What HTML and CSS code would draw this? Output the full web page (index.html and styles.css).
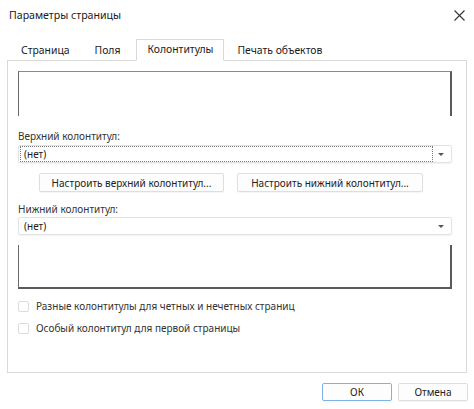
FILE: index.html
```html
<!DOCTYPE html>
<html lang="ru">
<head>
<meta charset="utf-8">
<title>Параметры страницы</title>
<link rel="stylesheet" href="styles.css">
</head>
<body>
<div class="dialog">
  <div class="titlebar">
    <span class="title">Параметры страницы</span>
    <svg class="close" width="11" height="11" viewBox="0 0 11 11"><path d="M0.5 0.5L10.5 10.5M10.5 0.5L0.5 10.5" stroke="#333" stroke-width="1.1" fill="none"/></svg>
  </div>
  <div class="tabs">
    <div class="tab t1">Страница</div>
    <div class="tab t2">Поля</div>
    <div class="tab t3 active">Колонтитулы</div>
    <div class="tab t4">Печать объектов</div>
  </div>
  <div class="panel">
    <div class="preview preview-top"></div>
    <div class="label l1">Верхний колонтитул:</div>
    <div class="select focused">
      <span class="select-text">(нет)</span>
      <span class="arrow"></span>
    </div>
    <div class="btn-row">
      <button class="btn b-top">Настроить верхний колонтитул...</button>
      <button class="btn b-bot">Настроить нижний колонтитул...</button>
    </div>
    <div class="label l2">Нижний колонтитул:</div>
    <div class="select">
      <span class="select-text">(нет)</span>
      <span class="arrow"></span>
    </div>
    <div class="preview preview-bottom"></div>
    <label class="check c1"><span class="box"></span>Разные колонтитулы для четных и нечетных страниц</label>
    <label class="check c2"><span class="box"></span>Особый колонтитул для первой страницы</label>
  </div>
  <div class="footer">
    <button class="btn ok">ОК</button>
    <button class="btn cancel">Отмена</button>
  </div>
</div>
</body>
</html>
```

FILE: styles.css
```css
html, body {
  margin: 0;
  padding: 0;
  background: #ffffff;
}
body {
  width: 474px;
  height: 409px;
  overflow: hidden;
  font-family: "Noto Sans", "Open Sans", sans-serif;
  font-size: 10px;
  color: #222;
}
.dialog {
  width: 474px;
  height: 409px;
  box-sizing: border-box;
  background: #fff;
}
.titlebar {
  height: 30px;
  display: flex;
  align-items: center;
  justify-content: space-between;
  padding: 0 9px 0 9px;
}
.title {
  font-size: 10.6px;
  color: #1a1a1a;
}
.close {
  display: block;
}
.tabs {
  display: flex;
  align-items: flex-end;
  height: 31px;
  padding-left: 10px;
  position: relative;
  z-index: 1;
  font-size: 10.4px;
}
.tab {
  height: 21px;
  line-height: 20px;
  padding: 0 11px;
  color: #1a1a1a;
}
.t1 { margin-right: 3px; }
.t2 { margin-right: 5px; }
.t3 { margin-right: 2px; }
.tab.active {
  background: #fff;
  border: 1px solid #d9d9d9;
  border-bottom: 1px solid #fff;
  box-sizing: border-box;
  line-height: 19px;
  height: 22px;
  padding: 0 10px;
}
.panel {
  margin: -1px 7px 0 7px;
  height: 313px;
  box-sizing: border-box;
  border: 1px solid #d9d9d9;
  padding: 10px 14px 0 10px;
  display: flex;
  flex-direction: column;
}
.preview {
  height: 45px;
  flex: none;
  box-sizing: border-box;
  border-left: 1px solid #6a6a6a;
  border-right: 2px solid #5a5a5a;
}
.preview-top {
  border-top: 1px solid #8a8a8a;
}
.preview-bottom {
  border-bottom: 2px solid #5a5a5a;
  margin-top: 10px;
  height: 44px;
}
.label {
  color: #333;
  height: 14px;
  line-height: 14px;
  flex: none;
}
.l1 { margin-top: 13px; }
.l2 { margin-top: 10px; }
.select {
  margin-top: 2px;
  height: 18px;
  flex: none;
  box-sizing: border-box;
  border: 1px solid #e3e3e3;
  border-radius: 2px;
  box-shadow: 0 1px 1px rgba(0,0,0,0.05);
  display: flex;
  align-items: center;
  padding: 0 0 0 1px;
  position: relative;
}
.l2 + .select { margin-top: 1px; }
.select-text {
  flex: 1;
  height: 14px;
  line-height: 14px;
  padding-left: 3px;
  color: #222;
  border: 1px dotted transparent;
  margin-right: 18px;
}
.select.focused .select-text {
  border-color: #777;
}
.arrow {
  position: absolute;
  right: 7px;
  top: 7px;
  width: 0;
  height: 0;
  border-left: 3px solid transparent;
  border-right: 3px solid transparent;
  border-top: 3px solid #555;
}
.btn-row {
  display: flex;
  margin-top: 10px;
  padding-left: 21px;
  gap: 13px;
  flex: none;
}
.btn {
  font-family: inherit;
  font-size: 10px;
  color: #222;
  background: #fdfdfd;
  border: 1px solid #dedede;
  border-radius: 2px;
  height: 19px;
  padding: 0;
  margin: 0;
  box-sizing: border-box;
  line-height: 16px;
  box-shadow: 0 1px 1px rgba(0,0,0,0.04);
}
.b-top { width: 185px; }
.b-bot { width: 186px; }
.check {
  display: flex;
  align-items: center;
  color: #333;
  height: 14px;
  line-height: 14px;
  flex: none;
}
.c1 { margin-top: 10px; }
.c2 { margin-top: 8px; }
.box {
  width: 11px;
  height: 11px;
  box-sizing: border-box;
  border: 1px solid #dcdcdc;
  border-radius: 2px;
  background: #fff;
  margin-right: 7px;
}
.footer {
  display: flex;
  justify-content: flex-end;
  gap: 6px;
  padding: 10px 6px 0 0;
}
.ok, .cancel {
  width: 70px;
  height: 18px;
}
.ok {
  border-color: #7fb3e6;
}
```
